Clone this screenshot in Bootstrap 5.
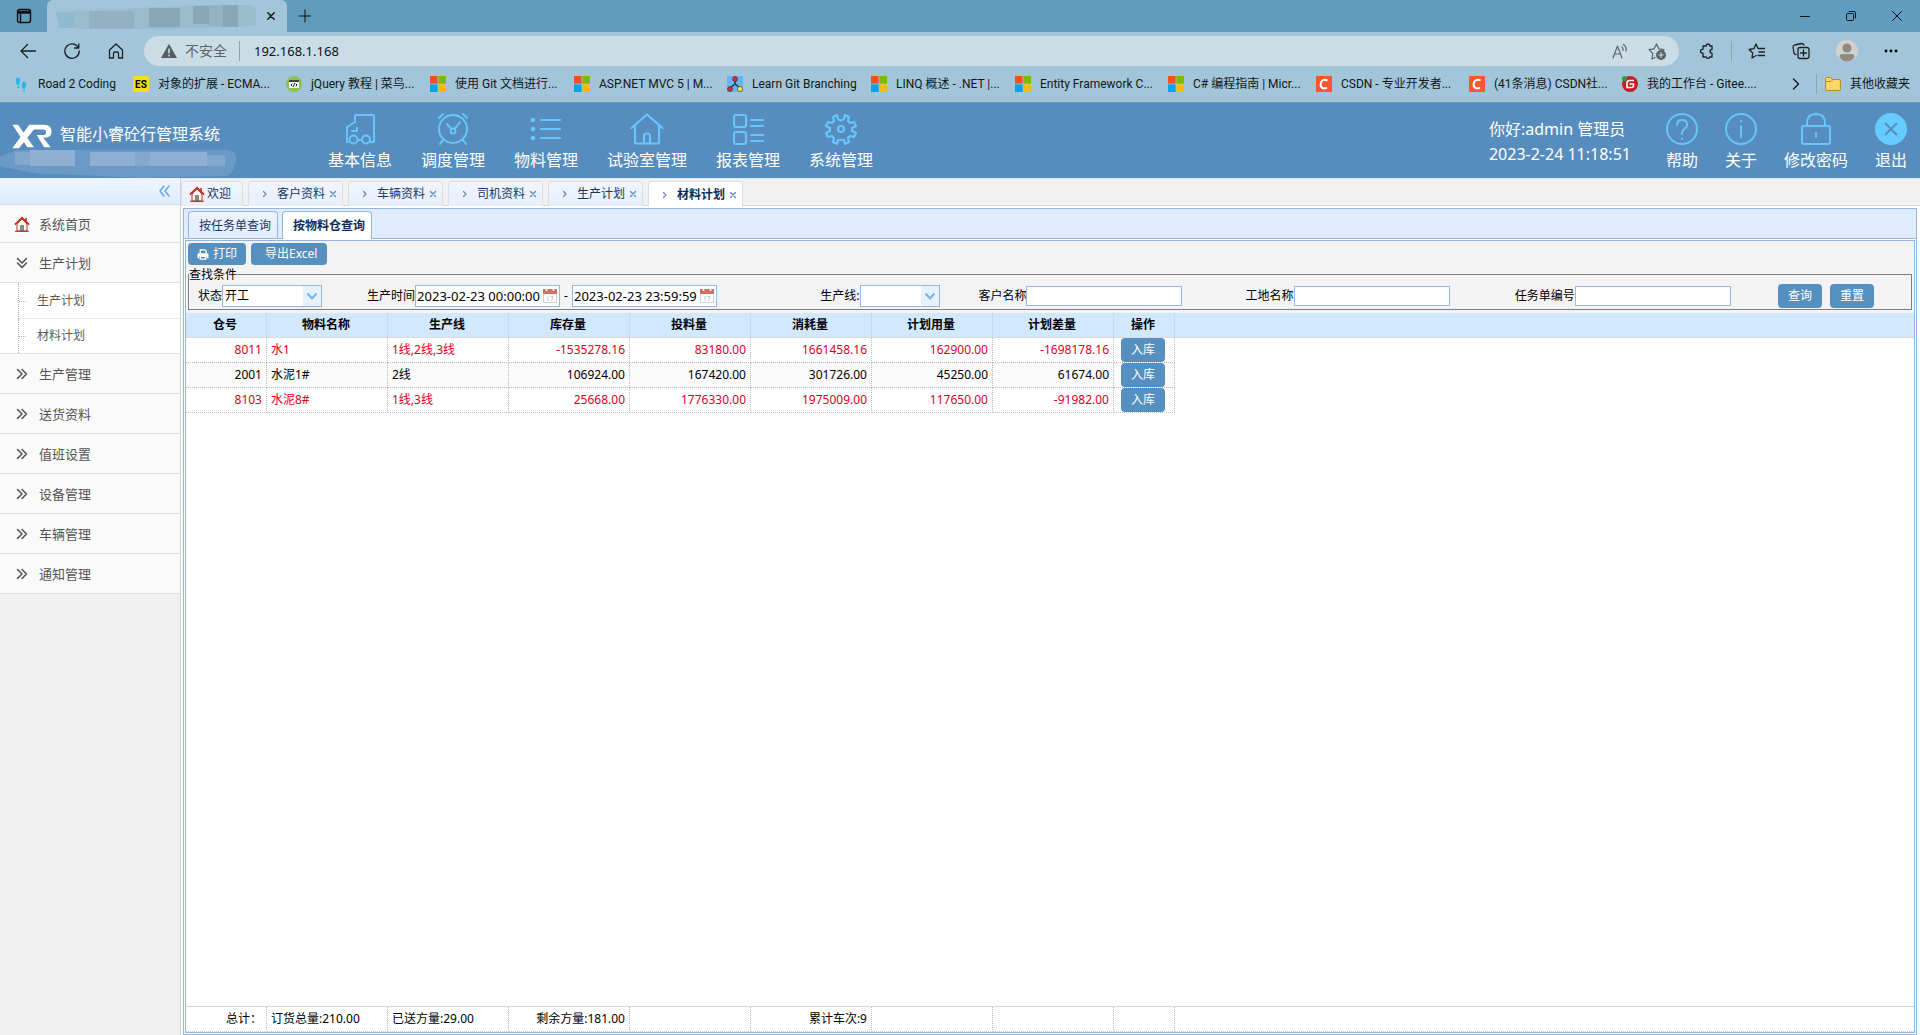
<!DOCTYPE html>
<html lang="zh-CN">
<head>
<meta charset="utf-8">
<meta name="viewport" content="width=device-width, initial-scale=1">
<title>智能小睿砼行管理系统</title>
<link href="https://cdn.jsdelivr.net/npm/bootstrap@5.3.0/dist/css/bootstrap.min.css" rel="stylesheet">
<style>
body{font-family:"Noto Sans","Noto Sans CJK SC",sans-serif;font-size:12px;line-height:16px;color:#000;background:#f0f0f0}
a{text-decoration:none;color:inherit}
svg{display:block;flex:none}
.ln{fill:none;stroke:currentColor;stroke-linecap:round;stroke-linejoin:round}
button.plain{border:0;background:none;padding:0;color:inherit}
/* browser frame */
.strip{height:32px;background:#619cbe;color:#111}
.strip-lead{width:47px}
.page-tab{width:240px;height:32px;background:#a3c5d9;border-radius:6px 6px 0 0;padding:0 12px 0 8px}
.win-btns{gap:36px;padding-right:18px}
.toolrow{height:39px;background:#a3c5d9;color:#1b2125;padding-bottom:2px}
.tool-left{width:144px;padding-left:20px;gap:28px}
.address{height:30px;border-radius:15px;background:#cadde7;padding:0 13px 0 17px;color:#5c6468}
.address label{font-size:14px}
.address input{border:0;background:none;outline:0;font-size:13px;color:#111;padding:0 0 0 14px;height:20px;border-left:1px solid #8fa2ab;margin-left:12px}
.tool-right{width:241px;padding-left:20px;gap:26px}
.vsep{width:1px;height:20px;background:#86a6b9}
.marks{height:31px;background:#a3c5d9;padding:0 10px 5px 13px;color:#10171b;font-family:Roboto,"Noto Sans CJK SC",sans-serif}
.marks a{display:flex;align-items:center;gap:9px;white-space:nowrap}
.marks .w1{width:120px}.marks .w2{width:144px}.marks .w3{width:153px}.marks .w4{width:148px}
.edge-line{height:1px;background:#6f9ab5}
/* application header */
.apphead{height:75px;background:#568dbe;color:#fff;font-size:16px;line-height:24px}
.brand{width:328px;padding:19px 0 0 11px;gap:6px}
.blurred{left:0;top:44px}
.topnav{gap:29px}
.topnav a{display:flex;flex-direction:column;align-items:center;gap:3px;padding-top:10px}
.topnav svg,.quick svg{color:#66c6fb}
.quick{gap:27px;padding-right:13px}
.quick a{display:flex;flex-direction:column;align-items:center;gap:3px;padding-top:10px}
.who{padding-top:14px;width:150px;line-height:25px}
/* sidebar */
.side{width:181px;border-right:1px solid #c9d8d2;background:#f0f0f0}
.side-top{height:27px;background:linear-gradient(#eff5ff,#dfecfd);border-bottom:1px solid #d5dde6;padding-right:10px;color:#5aa5dc}
.side-item{height:40px;display:flex;align-items:center;gap:9px;background:#fafafa;border-bottom:1px solid #e0e0e0;padding-left:14px;font-size:13px;color:#555}
.side-first{height:38px}
.side-sub{background:#fff;margin:0;padding:0 0 0 18px;list-style:none;border-bottom:1px solid #e0e0e0}
.side-sub li{height:36px;display:flex;align-items:center;border-left:1px dotted #9db3c6;color:#5c5c5c;gap:11px}
.side-sub li+li{height:34px}
.side-sub li::before{content:"";width:7px;border-top:1px dotted #9db3c6}
.sub-line{box-shadow:inset 0 -1px #e9e9e9}
/* page tabs */
.content{min-width:0}
.worktabs{height:28px;padding-top:2px;gap:5px;border-bottom:1px solid #d8d8d8;border-top:1px solid #dfe9f7;background:#f1f1f1}
.worktabs a{height:25px;display:flex;align-items:center;border:1px solid #dcdfe6;border-bottom:0;border-radius:4px 4px 0 0;background:linear-gradient(#f1f5fd,#e7eefb);color:#1b3564;width:95px;padding:0 5px 0 13px}
.worktabs .tab-home{width:62px;padding:0 0 0 7px;gap:2px}
.worktabs .on{background:#fff;font-weight:700;height:26px;color:#112c55}
.worktabs svg{color:#6c84a8}
.worktabs span{margin-left:9px}
.worktabs .shut{margin-left:auto;color:#5f86c0}
.frame-out{border:1px solid #95b4df;background:#fff;margin:2px 3px 0 2px}
.subtabs{height:30px;background:#e0ecff;border-bottom:1px solid #95b4df;padding:2px 0 0 4px;gap:4px}
.subtabs a{height:27px;width:90px;border:1px solid #95b4df;border-bottom:0;border-radius:4px 4px 0 0;background:linear-gradient(#eef4ff,#e2edff);padding-left:10px;white-space:nowrap;line-height:27px;color:#1b3564}
.subtabs .on{background:#fff;height:28px;font-weight:700;color:#112c55}
.frame-in{border:1px solid #95b4df;margin:1px}
.query{background:#f3f3f3;padding:2px 2px 3px 2px}
.acts{gap:5px}
.act{border:0;border-radius:4px;background:#5590c0;color:#fff;height:22px;padding:0 9px;display:inline-flex;align-items:center;gap:4px}
.act-x{padding:0 10px 0 14px}
.act-sm{height:24px;width:44px;padding:0;justify-content:center}
.finder{border:1px solid #808080;margin-top:3px;padding:0}
.finder legend{float:none;width:auto;margin:0;padding:0;font-size:12px;line-height:13px}
.finder-row{display:grid;grid-template-columns:169fr 453fr 158fr 267fr 269fr 263fr 133fr;padding-left:9px;height:28px;padding-top:2px;align-items:center}
.finder-row>div{display:flex;align-items:center;white-space:nowrap}
.box{border:1px solid #95b8e7;background-color:#fff;height:20px;width:156px;padding:0 2px;font-size:12px;outline:0}
.pick{height:22px;width:100px;appearance:none;border-radius:0;background:url("data:image/svg+xml,%3Csvg xmlns='http://www.w3.org/2000/svg' width='18' height='20'%3E%3Crect width='18' height='20' fill='%23e6f1fd'/%3E%3Cpath d='M4.500 7.500l4.500 5 4.500-5' fill='none' stroke='%2378b4e4' stroke-width='2'/%3E%3C/svg%3E") right center no-repeat #fff}
.pick-s{width:80px}
.when{height:22px;width:145px;display:flex;align-items:center;border:1px solid #95b8e7;background:#fff;padding-right:1px}
.when input{border:0;outline:0;flex:1;min-width:0;font-size:13px;padding:0 0 0 1px}
.data{table-layout:fixed;width:100%;border-collapse:separate;border-spacing:0}
.data th{height:25px;background:#d1e8ff;text-align:center;border-right:1px solid #c3dcf3;padding:0 2px 0 0;border-bottom:1px solid #dcdcdc}
.data th:last-child,.data td:last-child{border-right:0}
.data td{height:25px;padding:0 4px 0 4px;border-right:1px dotted #bbb;border-bottom:1px dotted #bbb;text-align:right;white-space:nowrap}
.data td:last-child{border-bottom:0;background:#fff}
.data .tx{text-align:left}
.data .op{padding:0 0 0 7px;text-align:left}
.data .op .act{display:flex}
.alt td{background:#fafafa}
.low td{color:#e0001b}
.sum{border-top:1px solid #d5d5d5}
.data.sum td{border-bottom:1px dotted #ccc;height:25px}
.c1{width:81px}.c2{width:121px}.c3{width:61px}
</style>
<script src="https://cdn.jsdelivr.net/npm/bootstrap@5.3.0/dist/js/bootstrap.bundle.min.js"></script>
</head>
<body class="d-flex flex-column min-vh-100">
<svg width="0" height="0" class="position-absolute" aria-hidden="true">
<symbol id="ms" viewBox="0 0 16 16"><path fill="#f25022" d="M0 0h7.600v7.600H0z"/><path fill="#7fba00" d="M8.400 0H16v7.600H8.400z"/><path fill="#00a4ef" d="M0 8.400h7.600V16H0z"/><path fill="#ffb900" d="M8.400 8.400H16V16H8.400z"/></symbol>
<symbol id="cs" viewBox="0 0 16 16"><path fill="#fc5531" d="M0 0h16v16H0z"/><path d="M11.500 4.600C8.500 2.600 5 4 4.600 8c-.3 3.800 3 5.400 6.400 3.600" fill="none" stroke="#fff" stroke-width="2"/></symbol>
<symbol id="house" viewBox="0 0 16 16"><path d="M3 8v7h10V8L8 3z" fill="#fbf6f0" stroke="#a63a2c"/><path d="M6.500 9.500h3V15h-3z" fill="#8a8f98" stroke="#555" stroke-width=".6"/><path d="M1 15.300h14" stroke="#b02a1e"/><path d="M12 2v3" stroke="#b02a1e" stroke-width="1.500"/><path d="M.8 8.600L8 1.500l7.200 7.100" fill="none" stroke="#c4281b" stroke-width="1.500"/></symbol>
<symbol id="more" viewBox="0 0 16 16"><path class="ln" stroke-width="1.600" d="M3.500 3.500L8 8l-4.500 4.500M8 3.500L12.500 8 8 12.500"/></symbol>
<symbol id="arr" viewBox="0 0 6 8"><path class="ln" stroke-width="1.200" d="M1.500 1.500L4 4 1.500 6.500"/></symbol>
<symbol id="ex" viewBox="0 0 8 8"><path class="ln" stroke-width="1.300" d="M1.500 1.500l5 5m0-5l-5 5"/></symbol>
<symbol id="cal" viewBox="0 0 16 16"><path fill="#fff" stroke="#c9d3cf" d="M1.500 3.500h13v11h-13z"/><path fill="#dd6a62" d="M1 1h14v5H1z"/><path stroke="#fff" stroke-width="1.600" d="M4.500 0v3M11.500 0v3"/><path stroke="#c4cacd" fill="none" d="M6 8v5M8.500 8.500h2.500L9.500 13"/></symbol>
</svg>

<header>
<div class="strip d-flex align-items-center">
 <button class="plain strip-lead" aria-label="标签操作"><svg class="ln ms-3" width="16" height="16" viewBox="0 0 16 16" stroke-width="1.400"><rect x="1.500" y="1.500" width="13" height="13" rx="2"/><path d="M2 3.500h12M2 5h12M4.500 6v8" /></svg></button>
 <div class="page-tab d-flex align-items-center justify-content-between">
  <svg width="202" height="26" aria-hidden="true"><path d="M0 9l60-3L150 2h46l5 3v18l-60 2-60 2H30L4 21z" fill="#9abccd"/><path d="M2 10h18v15H4z" fill="#8fbad1"/><path d="M34 8h45v19H34z" fill="#92b2c3"/><path d="M94 5h31v19H94zM138 3h16v18h-16zM168 2h15v22h-15z" fill="#88a8b9"/><path d="M154 3h14v20h-14z" fill="#93b3c4"/></svg>
  <button class="plain" aria-label="关闭标签"><svg class="ln" width="8" height="8" viewBox="0 0 8 8" stroke-width="1.400"><path d="M.8.8l6.400 6.400m0-6.400L.8 7.200"/></svg></button>
 </div>
 <button class="plain ms-2 ps-1" aria-label="新建标签"><svg class="ln" width="12" height="14" viewBox="0 0 12 14"><path d="M6 1v12M.5 7h11"/></svg></button>
 <div class="win-btns ms-auto d-flex align-items-center">
  <button class="plain" aria-label="最小化"><svg class="ln" width="10" height="10"><path d="M.5 5.500h9"/></svg></button>
  <button class="plain" aria-label="还原"><svg class="ln" width="10" height="10"><rect x=".5" y="2.500" width="7" height="7" rx="1"/><path d="M3 .5h5q1.500 0 1.500 1.500v5"/></svg></button>
  <button class="plain" aria-label="关闭"><svg class="ln" width="10" height="10"><path d="M.5.5l9 9m0-9l-9 9"/></svg></button>
 </div>
</div>
<div class="toolrow d-flex align-items-center">
 <div class="tool-left d-flex">
  <button class="plain" aria-label="返回"><svg class="ln" width="16" height="16" stroke-width="1.300"><path d="M15.500 8H1M7.500 1.500L1 8l6.500 6.500"/></svg></button>
  <button class="plain" aria-label="刷新"><svg class="ln" width="16" height="16" stroke-width="1.300"><path d="M14.500 5A7.200 7.200 0 1 0 15.200 8M14.800.8V5h-4.300"/></svg></button>
  <button class="plain" aria-label="主页"><svg class="ln" width="16" height="16" stroke-width="1.300"><path d="M1.500 7L8 1l6.500 6v8h-4v-4.500q0-1.500-1.200-1.500H6.700q-1.200 0-1.200 1.500V15h-4z"/></svg></button>
 </div>
 <div class="address d-flex align-items-center flex-grow-1">
  <svg width="16" height="16"><path fill="#555c60" d="M8 .8L16 15H0z"/><path stroke="#cadde7" stroke-width="1.600" d="M8 5.500v5M8 11.800v1.600"/></svg>
  <label for="url" class="ms-2">不安全</label>
  <input id="url" class="flex-grow-1" value="192.168.1.168">
  <svg class="ln me-3" width="20" height="16" stroke-width="1.200"><path d="M1 15L5.500 3 10 15M2.500 11h6M10 4q1.500 1.500 1 3.500M11.500 1.500Q15 4 14 8"/></svg>
  <svg width="18" height="18"><path class="ln" stroke-width="1.200" d="M7 15.500l-3 1.500.8-5.500L1 7.700l5-.8L8.500 2 11 6.900l5 .8-1.500 1.600"/><circle cx="13" cy="13" r="5" fill="#5c6468"/><path stroke="#cadde7" stroke-width="1.200" d="M13 10.500v5M10.500 13h5"/></svg>
 </div>
 <div class="tool-right d-flex align-items-center">
  <div class="d-flex align-items-center gap-3">
  <svg class="ln" width="16" height="16" stroke-width="1.300"><path d="M5 3h2.200q0-2 1.800-2t1.800 2H13v3.500q-2 0-2 1.800t2 1.800V14h-2.500q0 1.500-1.500 1.500T7.300 14H4v-3.800q-2.500 0-2.500-2T4 6.300V3z"/></svg>
  <span class="vsep"></span>
  <svg class="ln" width="18" height="16" stroke-width="1.300"><path d="M8 12.500L4 15l.7-5L1.200 6.500l4.700-.8L8 1l2 4.500h6.500M11 9h5.500M10 12.500h6.500"/></svg>
  </div>
  <svg class="ln" width="18" height="18" stroke-width="1.300"><rect x="6" y="5.500" width="11" height="11" rx="2"/><path d="M11.500 8v6M8.500 11h6M4 12.500Q2.500 12.500 2 11L1 5q0-1.500 1.500-2l7-1.500q2 0 2.500 1.500"/></svg>
  <svg width="22" height="22"><circle cx="11" cy="11" r="11" fill="#d3d0cd"/><circle cx="11" cy="8" r="4.500" fill="#918b86"/><path d="M3.500 17q0-3 3-3h9q3 0 3 3-2.500 4.500-7.500 4.500T3.500 17z" fill="#918b86"/></svg>
  <svg width="14" height="4"><circle cx="2" cy="2" r="1.400"/><circle cx="7" cy="2" r="1.400"/><circle cx="12" cy="2" r="1.400"/></svg>
 </div>
</div>
<nav class="marks d-flex align-items-center" aria-label="收藏夹">
 <a href="#" class="w1"><svg width="16" height="16"><path fill="#29b6ea" d="M3 3q2-3 4 0 1 2-.5 4L6 9H4Q2 6 3 3zM4.500 10h2q0 2.500-1.200 2.500T4.500 10zM9 7q2-3 4 0 .8 2-.5 4L12 13h-2Q8 10 9 7zM10 14h2q0 2-1 2t-1-2z"/></svg>Road 2 Coding</a>
 <a href="#" class="w3"><svg width="16" height="16"><path fill="#f5dd1e" d="M0 0h16v16H0z"/><text x="8" y="12" text-anchor="middle" font-size="10" font-weight="700">ES</text></svg>对象的扩展 - ECMA...</a>
 <a href="#" class="w2"><svg width="16" height="16"><circle cx="8" cy="8" r="8" fill="#8cc152"/><path fill="#fff" d="M3 4h10v8H3z"/><path fill="#444" d="M3 4h10v2H3z"/><path class="ln" stroke="#555" d="M6 8L5 9l1 1M10 8l1 1-1 1M8.500 7.500l-1 3"/></svg>jQuery 教程 | 菜鸟...</a>
 <a href="#" class="w2"><svg width="16" height="16"><use href="#ms"/></svg>使用 Git 文档进行...</a>
 <a href="#" class="w3"><svg width="16" height="16"><use href="#ms"/></svg>ASP.NET MVC 5 | M...</a>
 <a href="#" class="w2"><svg width="16" height="16"><path fill="#64b5f0" d="M0 0h16v16H0z"/><path stroke="#24364b" stroke-width="1.500" fill="none" d="M8 4v4l-5 4M8 8l5 4"/><circle cx="8" cy="3" r="2.500" fill="#e0263a" stroke="#333" stroke-width=".6"/><circle cx="3" cy="13" r="2.500" fill="#e0263a" stroke="#333" stroke-width=".6"/><circle cx="13" cy="13" r="2.500" fill="#ffe94d" stroke="#333" stroke-width=".6"/></svg>Learn Git Branching</a>
 <a href="#" class="w2"><svg width="16" height="16"><use href="#ms"/></svg>LINQ 概述 - .NET |...</a>
 <a href="#" class="w3"><svg width="16" height="16"><use href="#ms"/></svg>Entity Framework C...</a>
 <a href="#" class="w4"><svg width="16" height="16"><use href="#ms"/></svg>C# 编程指南 | Micr...</a>
 <a href="#" class="w3"><svg width="16" height="16"><use href="#cs"/></svg>CSDN - 专业开发者...</a>
 <a href="#" class="w3"><svg width="16" height="16"><use href="#cs"/></svg>(41条消息) CSDN社...</a>
 <a href="#"><svg width="16" height="16"><circle cx="8" cy="8" r="8" fill="#c71d23"/><path d="M12 4.500H7.500Q5 4.500 5 7v4.500h4.500q2 0 2-2V8H7.500" fill="none" stroke="#fff" stroke-width="1.600"/><circle cx="2.500" cy="2.500" r="2.500" fill="#20a53a"/></svg>我的工作台 - Gitee....</a>
 <button class="plain ms-auto me-3" aria-label="更多"><svg class="ln" width="8" height="12" stroke-width="1.300"><path d="M1.500 1L6.500 6l-5 5"/></svg></button>
 <span class="vsep me-2"></span>
 <a href="#"><svg width="16" height="16"><path fill="#ffd667" stroke="#b98a1c" d="M.6 2.500q0-1 1-1h4l1.600 2h7q1.200 0 1.200 1.200v8.600q0 1.200-1.200 1.200H1.800Q.6 14.500.6 13.300z"/><path stroke="#b98a1c" d="M1 5.500h5l2-2"  fill="none"/></svg>其他收藏夹</a>
</nav>
<div class="edge-line"></div>
<div class="apphead d-flex position-relative">
 <svg class="blurred position-absolute" width="240" height="32" aria-hidden="true"><path d="M0 10L16 3h210q10 0 10 8-2 18-12 18l-84 2-60-3-40-1Q12 22 0 19z" fill="#6c9ac6"/><path d="M30 3h45v16H30zM90 5h45v14H90zM150 5h57v14h-57z" fill="#90b0d3"/><path d="M15 5h15v13H15zM135 5h15v14h-15zM207 8h18v11h-18z" fill="#83a8ce"/></svg>
 <div class="brand d-flex position-relative">
  <svg width="43" height="28" viewBox="0 0 43 30"><path d="M0 3h6l17 24h-7zM18 3h16q8 0 8 7t-7 7h-2l8 10h-7l-8-13h7q3 0 3-3t-3-3H23L7 28H0z" fill="#fff"/></svg>
  <span>智能小睿砼行管理系统</span>
 </div>
 <nav class="topnav d-flex">
  <a href="#"><svg class="ln" width="32" height="32" stroke-width="2"><path d="M3 29V14l8-5V3q0-1 1-1h17q1 0 1 1v25q0 1-1 1h-3M3 29h1M13 15v3H8M14 27h4"/><circle cx="9.500" cy="26.500" r="4"/><circle cx="22" cy="26.500" r="4"/></svg>基本信息</a>
  <a href="#"><svg class="ln" width="32" height="32" stroke-width="2"><circle cx="16" cy="16" r="14"/><circle cx="16" cy="18" r="2.500"/><path d="M10 11l4.500 5M23 9l-5.500 7M2 5l4-4M30 5l-4-4M6 27l-3 4M26 27l3 4"/></svg>调度管理</a>
  <a href="#"><svg class="ln" width="32" height="32" stroke-width="2.200"><path d="M11 7h19M11 16h19M11 25h19"/><circle cx="3" cy="7" r="1.200"/><circle cx="3" cy="16" r="1.200"/><circle cx="3" cy="25" r="1.200"/></svg>物料管理</a>
  <a href="#"><svg class="ln" width="34" height="32" stroke-width="2.200"><path d="M1.500 15L17 1.500 32.500 15M5 12.500V29q0 1.500 1.500 1.500h21Q29 30.500 29 29V12.500M14 30v-7q0-2.500 3-2.500t3 2.500v7"/></svg>试验室管理</a>
  <a href="#"><svg class="ln" width="32" height="32" stroke-width="2.200"><rect x="2" y="2" width="12" height="12" rx="2"/><rect x="2" y="19" width="12" height="12" rx="2"/><path d="M19 7h12M19 13h12M19 22h12M19 28h12"/></svg>报表管理</a>
  <a href="#"><svg class="ln" width="34" height="32" viewBox="0 0 34 32" stroke-width="2.200"><circle cx="17" cy="16" r="3"/><path d="M14 6l-1-4-4 2 1 4-2 2-4-1-2 4 4 2v3l-4 2 2 4 4-1 2 2-1 4 4 2 1-4h6l1 4 4-2-1-4 2-2 4 1 2-4-4-2v-3l4-2-2-4-4 1-2-2 1-4-4-2-1 4q-3 3-6 0z"/></svg>系统管理</a>
 </nav>
 <div class="quick d-flex ms-auto">
  <div class="who"><div>你好:admin 管理员</div><div>2023-2-24 11:18:51</div></div>
  <a href="#"><svg class="ln" width="32" height="32" stroke-width="2"><circle cx="16" cy="16" r="15"/><path d="M11 12q0-5 5-5t5 4.500q0 3-2.500 4.500T16 20v1M16 25.500v.5"/></svg>帮助</a>
  <a href="#"><svg class="ln" width="32" height="32" stroke-width="2"><circle cx="16" cy="16" r="15"/><path d="M16 13v11M16 8v.6"/></svg>关于</a>
  <a href="#"><svg class="ln" width="32" height="32" stroke-width="2"><rect x="2" y="13" width="28" height="18" rx="2"/><path d="M7 13v-3q0-9 9-9t9 9v3M16 20v4"/></svg>修改密码</a>
  <a href="#"><svg width="32" height="32"><circle cx="16" cy="16" r="16" fill="#66ccff"/><path d="M10 10l12 12m0-12L10 22" stroke="#568dbe" stroke-width="2"/></svg>退出</a>
 </div>
</div>
</header>

<div class="d-flex flex-grow-1">
<aside class="side flex-shrink-0">
 <div class="side-top d-flex align-items-center justify-content-end"><button class="plain" aria-label="收起菜单"><svg class="ln" width="11" height="12" stroke-width="1.300"><path d="M5 1L1 6l4 5M10 1L6 6l4 5"/></svg></button></div>
 <a href="#" class="side-item side-first"><svg width="16" height="16"><use href="#house"/></svg>系统首页</a>
 <a href="#" class="side-item"><svg width="16" height="16" viewBox="0 0 16 16"><path class="ln" stroke-width="1.600" d="M3.500 3.500L8 8l4.500-4.500M3.500 8L8 12.500 12.500 8"/></svg>生产计划</a>
 <ul class="side-sub"><li class="sub-line"><a href="#">生产计划</a></li><li><a href="#">材料计划</a></li></ul>
 <a href="#" class="side-item"><svg width="16" height="16"><use href="#more"/></svg>生产管理</a>
 <a href="#" class="side-item"><svg width="16" height="16"><use href="#more"/></svg>送货资料</a>
 <a href="#" class="side-item"><svg width="16" height="16"><use href="#more"/></svg>值班设置</a>
 <a href="#" class="side-item"><svg width="16" height="16"><use href="#more"/></svg>设备管理</a>
 <a href="#" class="side-item"><svg width="16" height="16"><use href="#more"/></svg>车辆管理</a>
 <a href="#" class="side-item"><svg width="16" height="16"><use href="#more"/></svg>通知管理</a>
</aside>
<main class="content flex-grow-1 d-flex flex-column bg-white">
 <nav class="worktabs d-flex">
  <a href="#" class="tab-home"><svg width="16" height="16"><use href="#house"/></svg>欢迎</a>
  <a href="#"><svg width="6" height="8"><use href="#arr"/></svg><span>客户资料</span><svg class="shut" width="8" height="8"><use href="#ex"/></svg></a>
  <a href="#"><svg width="6" height="8"><use href="#arr"/></svg><span>车辆资料</span><svg class="shut" width="8" height="8"><use href="#ex"/></svg></a>
  <a href="#"><svg width="6" height="8"><use href="#arr"/></svg><span>司机资料</span><svg class="shut" width="8" height="8"><use href="#ex"/></svg></a>
  <a href="#"><svg width="6" height="8"><use href="#arr"/></svg><span>生产计划</span><svg class="shut" width="8" height="8"><use href="#ex"/></svg></a>
  <a href="#" class="on"><svg width="6" height="8"><use href="#arr"/></svg><span>材料计划</span><svg class="shut" width="8" height="8"><use href="#ex"/></svg></a>
 </nav>
 <section class="frame-out flex-grow-1 d-flex flex-column">
  <nav class="subtabs d-flex"><a href="#">按任务单查询</a><a href="#" class="on">按物料仓查询</a></nav>
  <div class="frame-in flex-grow-1 d-flex flex-column">
   <form class="query" onsubmit="return false">
    <div class="acts d-flex">
     <button class="act"><svg width="12" height="11" viewBox="0 0 12 12"><path fill="none" stroke="#fff" stroke-width="1.400" d="M3 5V1h5l1.500 1.500V5M3 8h6v3H3z"/><path fill="#fff" d="M0 6q0-1.500 1.500-1.500h9Q12 4.500 12 6v4h-2V7.500H2V10H0z"/></svg>打印</button>
     <button class="act act-x">导出Excel</button>
    </div>
    <fieldset class="finder">
     <legend>查找条件</legend>
     <div class="finder-row">
      <div><label for="st">状态</label><select id="st" class="box pick"><option>开工</option></select></div>
      <div><label for="d1">生产时间</label><span class="when"><input id="d1" value="2023-02-23 00:00:00"><svg width="16" height="16"><use href="#cal"/></svg></span><span class="px-1">-</span><span class="when"><input aria-label="结束时间" value="2023-02-23 23:59:59"><svg width="16" height="16"><use href="#cal"/></svg></span></div>
      <div><label for="ln">生产线:</label><select id="ln" class="box pick pick-s"><option></option></select></div>
      <div><label for="cu">客户名称</label><input id="cu" class="box"></div>
      <div><label for="si">工地名称</label><input id="si" class="box"></div>
      <div><label for="no">任务单编号</label><input id="no" class="box"></div>
      <div class="gap-2"><button class="act act-sm">查询</button><button class="act act-sm">重置</button></div>
     </div>
    </fieldset>
   </form>
   <table class="data">
    <colgroup><col class="c1"><col class="c2" span="7"><col class="c3"><col></colgroup>
    <thead><tr><th>仓号</th><th>物料名称</th><th>生产线</th><th>库存量</th><th>投料量</th><th>消耗量</th><th>计划用量</th><th>计划差量</th><th>操作</th><th></th></tr></thead>
    <tbody>
    <tr class="low"><td>8011</td><td class="tx">水1</td><td class="tx">1线,2线,3线</td><td>-1535278.16</td><td>83180.00</td><td>1661458.16</td><td>162900.00</td><td>-1698178.16</td><td class="op"><button class="act act-sm">入库</button></td><td></td></tr>
    <tr class="alt"><td>2001</td><td class="tx">水泥1#</td><td class="tx">2线</td><td>106924.00</td><td>167420.00</td><td>301726.00</td><td>45250.00</td><td>61674.00</td><td class="op"><button class="act act-sm">入库</button></td><td></td></tr>
    <tr class="low"><td>8103</td><td class="tx">水泥8#</td><td class="tx">1线,3线</td><td>25668.00</td><td>1776330.00</td><td>1975009.00</td><td>117650.00</td><td>-91982.00</td><td class="op"><button class="act act-sm">入库</button></td><td></td></tr>
    </tbody>
   </table>
   <table class="data sum mt-auto">
    <colgroup><col class="c1"><col class="c2" span="7"><col class="c3"><col></colgroup>
    <tbody><tr><td>总计：</td><td class="tx">订货总量:210.00</td><td class="tx">已送方量:29.00</td><td>剩余方量:181.00</td><td></td><td>累计车次:9</td><td></td><td></td><td></td><td></td></tr></tbody>
   </table>
  </div>
 </section>
</main>
</div>
</body>
</html>
